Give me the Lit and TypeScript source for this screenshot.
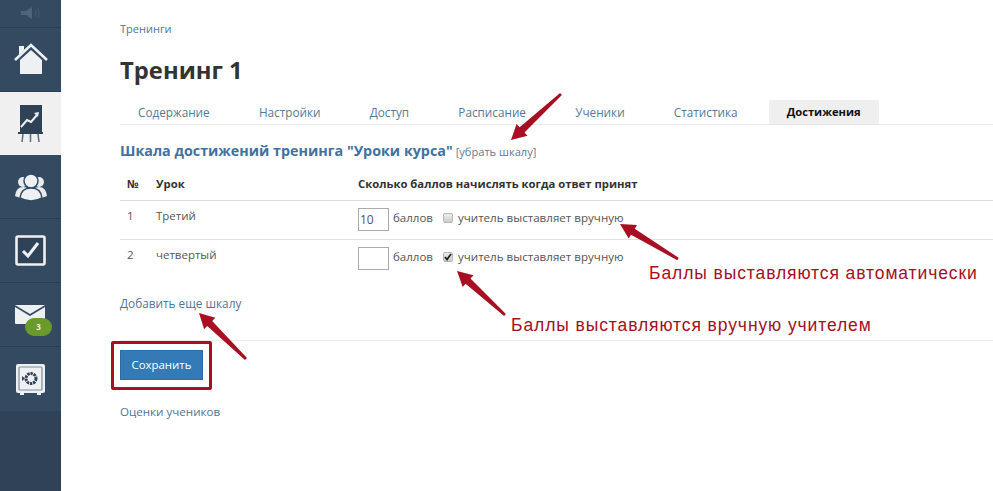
import { LitElement, html, css, svg } from "lit";
import { customElement } from "lit/decorators.js";

const arrows = [
  [561, 94, 511, 140],
  [678, 259, 620, 224],
  [505, 315, 457, 271],
  [246, 359, 199, 313],
];

function arrowPoints(x1: number, y1: number, x2: number, y2: number) {
  const len = Math.hypot(x2 - x1, y2 - y1);
  const ux = (x2 - x1) / len, uy = (y2 - y1) / len;
  const nx = -uy, ny = ux;
  const hl = 15, hw = 8, sw = 3.6, tail = 1.4;
  const bx = x2 - ux * hl, by = y2 - uy * hl;
  const pts = [
    [x1 + nx * tail, y1 + ny * tail],
    [bx + nx * sw, by + ny * sw],
    [bx + nx * hw, by + ny * hw],
    [x2, y2],
    [bx - nx * hw, by - ny * hw],
    [bx - nx * sw, by - ny * sw],
    [x1 - nx * tail, y1 - ny * tail],
  ];
  return pts.map((p) => p.map((v) => v.toFixed(1)).join(",")).join(" ");
}

@customElement("app-root")
export class AppRoot extends LitElement {
  static styles = css`
    :host { display: block; width: 993px; height: 491px; position: relative; overflow: hidden; background: #fff; font-family: "Open Sans", "Noto Sans", sans-serif; font-size: 11.6px; color: #444; }
    .page { display: flex; height: 491px; }
    .side { width: 61px; flex: none; background: #2f4257; display: flex; flex-direction: column; }
    .item { display: flex; align-items: center; justify-content: center; background: #344a60; border-bottom: 1px solid #2b3d50; box-sizing: border-box; height: 64px; }
    .item.top { height: 27.5px; }
    .item.home { height: 64.5px; }
    .item.active { background: #f0f0f0; height: 63px; border-bottom: none; }
    .item.last { border-bottom: none; height: 64px; }
    .main { flex: 1; padding: 22px 0 0 59px; min-width: 0; }
    a { color: #4f7696; text-decoration: none; }
    .crumb { display: block; line-height: 14px; height: 14px; font-size: 11px; }
    h1 { margin: 18px 0 0; font-size: 23.8px; line-height: 32px; font-weight: 700; color: #333; height: 32px; }
    .tabs { display: flex; gap: 13.2px; margin-top: 14px; height: 25px; border-bottom: 1px solid #e8e8e8; box-sizing: border-box; }
    .tab { padding: 0 18px; line-height: 24px; height: 24px; font-size: 11.75px; color: #557a98; white-space: nowrap; }
    .tab.on { background: #efefef; color: #111; font-weight: 700; font-size: 11.2px; }
    .head { margin-top: 16px; display: flex; align-items: baseline; gap: 3px; height: 20px; line-height: 20px; }
    .head b { font-size: 14.3px; color: #3f729f; font-weight: 700; white-space: nowrap; }
    .head a { font-size: 11.1px; color: #5c7c96; }
    .grid { margin-top: 17px; }
    .row { display: grid; grid-template-columns: 29px 202px 1fr; padding-left: 7px; border-bottom: 1px solid #e2e2e2; font-size: 11.5px; color: #555; }
    .row.h { height: 22px; line-height: 12px; font-weight: 700; color: #333; font-size: 11.3px; border-bottom-color: #dcdcdc; }
    .row.b { height: 39px; padding-top: 7px; box-sizing: border-box; line-height: 16px; }
    .row.b:last-child { border-bottom: none; }
    .fields { display: flex; align-items: center; height: 23px; }
    .box { width: 31px; height: 23px; box-sizing: border-box; border: 1px solid #aaa; padding: 0 0 0 1px; font: 12px/21px "Open Sans", sans-serif; color: #555; }
    .unit { margin-left: 4px; margin-right: 10px; padding-bottom: 3px; }
    .label { padding-bottom: 3px; font-size: 11.6px; }
    .check { width: 10px; height: 10px; box-sizing: border-box; background: linear-gradient(#eee, #ccc); border: 1px solid #b5b5b5; border-radius: 2px; margin-right: 5px; display: flex; margin-bottom: 3px; }
    .add { display: block; margin-top: 16px; line-height: 16px; font-size: 11.8px; }
    .rule { height: 1px; background: #ececec; margin-top: 29px; }
    .btnwrap { width: 83px; margin: 9px 0 0; }
    .btn { height: 30px; background: #337ab7; color: #fff; display: flex; align-items: center; justify-content: center; font-size: 11.4px; padding-bottom: 2px; border: 1px solid #2e6da4; box-sizing: border-box; }
    .marks { margin-top: 24px; display: block; line-height: 16px; font-size: 11.6px; }
    .overlay { position: absolute; left: 0; top: 0; pointer-events: none; }
    .redbox { position: absolute; left: 111px; top: 341px; width: 101px; height: 49px; box-sizing: border-box; border: 3px solid #a80f22; border-radius: 2px; }
    .note { position: absolute; font-family: "Liberation Sans", sans-serif; font-size: 17.5px; line-height: 20px; color: #a3101f; white-space: nowrap; letter-spacing: 0.9px; }
    .n1 { left: 649px; top: 263px; }
    .n2 { left: 511px; top: 315px; }
    .badge { position: absolute; left: 25px; top: 318px; width: 27px; height: 18px; border-radius: 9px; background: #6b9a2c; color: #e8f5d0; font-size: 8px; font-weight: 700; line-height: 18px; text-align: center; }
  `;

  render() {
    return html`
      <div class="page">
        <nav class="side">
          <div class="item top">
            <svg width="22" height="14" viewBox="0 0 22 14"><path d="M1 5h5l6-4v12l-6-4H1z" fill="#4e6479"/><path d="M15 3q2 4 0 8M18 2q2 5 0 10" stroke="#435a70" fill="none" stroke-width="1"/></svg>
          </div>
          <div class="item home">
            <svg width="34" height="32" viewBox="0 0 34 32"><path d="M6 17 17 7l11 10v14H6z" fill="#eef1f3"/><path d="M1 17 17 2l16 15" fill="none" stroke="#eef1f3" stroke-width="2.6"/><path d="M5 3h5v4l-5 5z" fill="#eef1f3"/></svg>
          </div>
          <div class="item active">
            <svg width="26" height="38" viewBox="0 0 26 38"><rect x="2" y="0" width="22" height="27" fill="#2f4155"/><path d="M3 22 9 15l4 2 6-7" fill="none" stroke="#eef1f3" stroke-width="2"/><path d="M16 8l5-1-1 5z" fill="#eef1f3"/><rect y="27" width="25" height="2" fill="#2f4155"/><path d="M5 29 4 37M12.500 29v8M20 29l1 8" stroke="#5a6c7e" stroke-width="1.500"/></svg>
          </div>
          <div class="item">
            <svg width="32" height="28" viewBox="0 0 32 28"><circle cx="8" cy="9" r="5" fill="#e8ecef"/><circle cx="24" cy="9" r="5" fill="#e8ecef"/><path d="M0 23q1-9 8-9t8 9l-8 3z M16 23q1-9 8-9t8 9l-8 3z" fill="#e8ecef"/><circle cx="16" cy="8" r="7" fill="#eef1f3" stroke="#344a60" stroke-width="1.500"/><path d="M5 25q1-10 11-10t11 10q-5 3-11 3t-11-3z" fill="#eef1f3" stroke="#344a60" stroke-width="1.500"/></svg>
          </div>
          <div class="item">
            <svg width="31" height="31" viewBox="0 0 31 31"><rect x="1.500" y="1.500" width="28" height="28" rx="1.500" fill="#2f4257" stroke="#eef1f3" stroke-width="2.600"/><path d="M8 16l5 5 10-13" fill="none" stroke="#eef1f3" stroke-width="3"/></svg>
          </div>
          <div class="item">
            <svg width="31" height="20" viewBox="0 0 31 20"><rect width="30" height="19" rx="1" fill="#eef1f3"/><path d="M0 1l15 9L30 1" fill="none" stroke="#344a60" stroke-width="1.600"/></svg>
          </div>
          <div class="item last">
            <svg width="31" height="33" viewBox="0 0 31 33"><rect x="1" y="1" width="29" height="29" rx="2" fill="#eef1f3"/><rect x="4" y="4" width="23" height="23" rx="1" fill="#eef1f3" stroke="#7e8e9d" stroke-width="1.200"/><circle cx="16" cy="15.500" r="5" fill="none" stroke="#2f4257" stroke-width="3" stroke-dasharray="2.400 .8"/><path d="M7 13l3 2.500-3 2.500z" fill="#2f4257"/><path d="M5 30h4v2H5zM22 30h4v2h-4z" fill="#eef1f3"/></svg>
          </div>
        </nav>
        <main class="main">
          <a class="crumb" href="#">Тренинги</a>
          <h1>Тренинг 1</h1>
          <div class="tabs">
            <a class="tab">Содержание</a><a class="tab">Настройки</a><a class="tab">Доступ</a><a class="tab">Расписание</a><a class="tab">Ученики</a><a class="tab">Статистика</a><a class="tab on">Достижения</a>
          </div>
          <div class="head"><b>Шкала достижений тренинга "Уроки курса"</b><a href="#">[убрать шкалу]</a></div>
          <div class="grid">
            <div class="row h"><span>№</span><span>Урок</span><span>Сколько баллов начислять когда ответ принят</span></div>
            <div class="row b"><span>1</span><span>Третий</span>
              <div class="fields"><div class="box">10</div><span class="unit">баллов</span><span class="check"></span><span class="label">учитель выставляет вручную</span></div></div>
            <div class="row b"><span>2</span><span>четвертый</span>
              <div class="fields"><div class="box"></div><span class="unit">баллов</span><span class="check"><svg width="8" height="8" viewBox="0 0 8 8"><path d="M1 4l2 2.500L7 1" fill="none" stroke="#222" stroke-width="1.800"/></svg></span><span class="label">учитель выставляет вручную</span></div></div>
          </div>
          <a class="add" href="#">Добавить еще шкалу</a>
          <div class="rule"></div>
          <div class="btnwrap"><div class="btn">Сохранить</div></div>
          <a class="marks" href="#">Оценки учеников</a>
        </main>
      </div>
      <div class="badge">3</div>
      <div class="redbox"></div>
      <svg class="overlay" width="993" height="491">
        ${arrows.map((a) => svg`<polygon points=${arrowPoints(a[0], a[1], a[2], a[3])} fill="#a80f22"/>`)}
      </svg>
      <div class="note n1">Баллы выставляются автоматически</div>
      <div class="note n2">Баллы выставляются вручную учителем</div>
    `;
  }
}
